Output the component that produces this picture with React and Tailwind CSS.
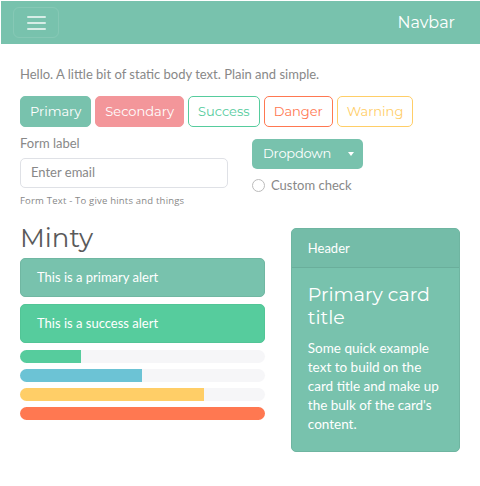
import React from 'react';

const heading = { fontFamily: '"Montserrat", "Open Sans", "DejaVu Sans", sans-serif' };

function Navbar() {
  return (
    <div className="ml-px mt-px h-[43px] bg-[#78c2ad] flex items-center justify-between pl-3 pr-[25px]">
      <button className="w-[46px] h-[31px] rounded-md border border-white/10 flex flex-col items-center justify-center gap-[4px]">
        <span className="block w-[19px] h-[2px] bg-white/70 rounded" />
        <span className="block w-[19px] h-[2px] bg-white/70 rounded" />
        <span className="block w-[19px] h-[2px] bg-white/70 rounded" />
      </button>
      <span className="text-white text-[16px]" style={heading}>Navbar</span>
    </div>
  );
}

const buttons = [
  { label: 'Primary', cls: 'bg-[#78c2ad] border-[#78c2ad] text-white' },
  { label: 'Secondary', cls: 'bg-[#f3969a] border-[#f3969a] text-white' },
  { label: 'Success', cls: 'bg-white border-[#56cc9d] text-[#56cc9d]' },
  { label: 'Danger', cls: 'bg-white border-[#ff7851] text-[#ff7851]' },
  { label: 'Warning', cls: 'bg-white border-[#ffce67] text-[#ffce67]' },
];

const bars = [
  { w: '25%', cls: 'bg-[#56cc9d]' },
  { w: '50%', cls: 'bg-[#6cc3d5]' },
  { w: '75%', cls: 'bg-[#ffce67]' },
  { w: '100%', cls: 'bg-[#ff7851]' },
];

export default function App() {
  return (
    <div className="w-[480px] h-[486px] bg-white text-[#888]" style={{ fontFamily: 'Lato, "Open Sans", sans-serif' }}>
      <Navbar />
      <div className="px-5">
        <p className="mt-[21px] text-[13px] leading-[18px]">Hello. A little bit of static body text. Plain and simple.</p>

        <div className="mt-[13px] flex gap-1">
          {buttons.map((b) => (
            <button
              key={b.label}
              className={`h-[31px] px-[9px] rounded-[5px] border text-[13px] ${b.cls}`}
              style={heading}
            >
              {b.label}
            </button>
          ))}
        </div>

        <div className="mt-[6px] flex gap-6">
          <div className="w-[208px]">
            <label className="block text-[13px] leading-[20px] text-[#888]">Form label</label>
            <div className="mt-[5px] h-[30px] rounded-[5px] border border-[#dfe1e6] flex items-center px-[10px] text-[13px] text-[#888]">
              Enter email
            </div>
            <p className="mt-[6px] text-[9.5px] text-[#888] tracking-[0.2px]" style={{ fontFamily: '"Open Sans", sans-serif' }}>
              Form Text - To give hints and things
            </p>
          </div>
          <div className="pt-[6px]">
            <button className="h-[30px] w-[111px] rounded-[5px] bg-[#78c2ad] text-white text-[13px] tracking-[-0.2px] flex items-center pl-[11px] pr-[9px]" style={heading}>
              <span className="flex-1 text-left">Dropdown</span>
              <span className="w-0 h-0 border-l-[3.5px] border-r-[3.5px] border-t-[4px] border-l-transparent border-r-transparent border-t-white" />
            </button>
            <div className="mt-[7px] flex items-center gap-[6px] text-[13px] text-[#888]">
              <span className="w-[13px] h-[13px] rounded-full border border-[#bbb] bg-white" />
              <span>Custom check</span>
            </div>
          </div>
        </div>

        <div className="mt-[20px] flex gap-[26px]">
          <div className="w-[246px]">
            <h1 className="text-[26px] leading-[26px] text-[#5a5a5a] -mt-[3px]" style={heading}>Minty</h1>
            <div className="mt-[7px] h-[39px] rounded-[5px] bg-[#78c2ad] border border-[#70b7a2] flex items-center px-[16px] text-white text-[13px]">
              This is a primary alert
            </div>
            <div className="mt-[7px] h-[39px] rounded-[5px] bg-[#56cc9d] border border-[#52c596] flex items-center px-[16px] text-white text-[13px]">
              This is a success alert
            </div>
            <div className="mt-[7px] flex flex-col gap-[6px]">
              {bars.map((b, i) => (
                <div key={i} className="h-[13px] rounded-full bg-[#f6f6f8] overflow-hidden">
                  <div className={`h-full ${b.cls}`} style={{ width: b.w }} />
                </div>
              ))}
            </div>
          </div>
          <div className="w-[170px] h-[224px] rounded-[5px] bg-[#78c2ad] border border-[#6fb5a1] overflow-hidden text-white">
            <div className="h-[39px] bg-[#74bca8] border-b border-[#6aae9b] flex items-center px-[16px] text-[13px]">Header</div>
            <div className="px-[16px] pt-[15px]">
              <h4 className="text-[19px] leading-[23px]" style={heading}>Primary card title</h4>
              <p className="mt-[10px] text-[13.5px] leading-[19px]">
                Some quick example text to build on the card title and make up the bulk of the card's content.
              </p>
            </div>
          </div>
        </div>
      </div>
    </div>
  );
}
